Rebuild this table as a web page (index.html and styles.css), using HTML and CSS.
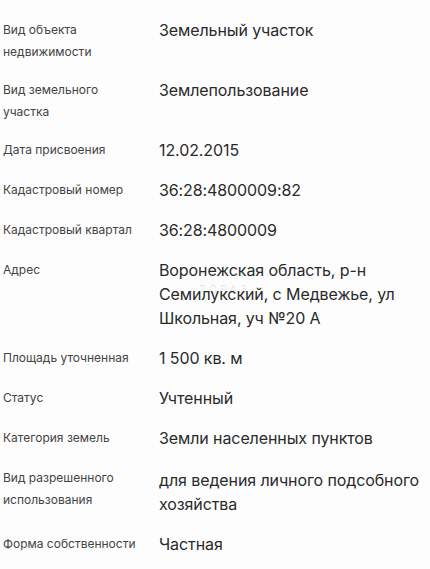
FILE: index.html
```html
<!DOCTYPE html>
<html lang="ru">
<head>
<meta charset="utf-8">
<link rel="stylesheet" href="styles.css">
</head>
<body>
<div class="props">
  <div class="row"><div class="label">Вид объекта<br>недвижимости</div><div class="value">Земельный участок</div></div>
  <div class="row"><div class="label">Вид земельного<br>участка</div><div class="value">Землепользование</div></div>
  <div class="row"><div class="label">Дата присвоения</div><div class="value">12.02.2015</div></div>
  <div class="row"><div class="label">Кадастровый номер</div><div class="value">36:28:4800009:82</div></div>
  <div class="row"><div class="label">Кадастровый квартал</div><div class="value">36:28:4800009</div></div>
  <div class="row"><div class="label">Адрес</div><div class="value addr">Воронежская область, р-н Семилукский, с Медвежье, ул Школьная, уч №20 А<span class="mark">ТОРАЗ</span></div></div>
  <div class="row"><div class="label">Площадь уточненная</div><div class="value">1 500 кв. м</div></div>
  <div class="row"><div class="label">Статус</div><div class="value">Учтенный</div></div>
  <div class="row"><div class="label">Категория земель</div><div class="value">Земли населенных пунктов</div></div>
  <div class="row row-low"><div class="label">Вид разрешенного<br>использования</div><div class="value">для ведения личного подсобного хозяйства</div></div>
  <div class="row"><div class="label">Форма собственности</div><div class="value">Частная</div></div>
</div>
</body>
</html>
```
FILE: styles.css
```css
html, body {
  margin: 0;
  padding: 0;
  background: #fdfdfd;
}
body {
  font-family: Inter, "Noto Sans", sans-serif;
}
.props {
  display: flex;
  flex-direction: column;
  gap: 16px;
  padding: 18px 0 0 3px;
}
.row {
  display: grid;
  grid-template-columns: 156px 1fr;
  align-items: start;
}
.label {
  font-size: 12px;
  line-height: 21.5px;
  color: #444;
  padding-top: 1px;
}
.value {
  font-size: 16px;
  line-height: 24px;
  letter-spacing: -0.1px;
  color: #2a2a2a;
}
.row-low .value {
  padding-top: 2px;
}
.addr {
  position: relative;
  padding-right: 10px;
}
.mark {
  position: absolute;
  left: 40px;
  top: 26px;
  font-size: 11px;
  letter-spacing: 3px;
  color: rgba(0,0,0,0.10);
  line-height: 11px;
}
```
